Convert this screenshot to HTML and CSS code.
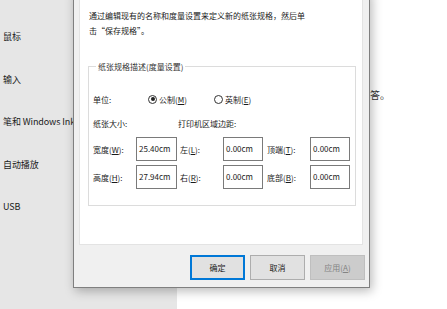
FILE: index.html
```html
<!DOCTYPE html>
<html lang="zh-CN">
<head>
    <meta charset="UTF-8">
    <title>纸张规格</title>
    <link rel="stylesheet" href="styles.css">
</head>
<body>

<div class="page">
    <!-- 设置左侧菜单 -->
    <div class="sidebar">
        <div class="nav-item">鼠标</div>
        <div class="nav-item">输入</div>
        <div class="nav-item">笔和 Windows Ink</div>
        <div class="nav-item">自动播放</div>
        <div class="nav-item">USB</div>
    </div>
    <div class="main">
        <div class="help-line">解答。</div>
    </div>
</div>

<!-- 纸张规格对话框 -->
<div class="dialog">
    <div class="panel">
        <p class="intro">通过编辑现有的名称和度量设置来定义新的纸张规格，然后单击“保存规格”。</p>

        <fieldset class="group">
            <legend>纸张规格描述(度量设置)</legend>

            <div class="unit-row">
                <span class="unit-label">单位:</span>
                <span class="radio-item metric"><span class="radio checked"></span>公制(<u>M</u>)</span>
                <span class="radio-item"><span class="radio"></span>英制(<u>E</u>)</span>
            </div>

            <div class="size-grid">
                <div class="head">纸张大小:</div>
                <div class="head margin-head">打印机区域边距:</div>

                <div class="lbl">宽度(<u>W</u>):</div>
                <div class="box">25.40cm</div>
                <div class="lbl mid">左(<u>L</u>):</div>
                <div class="box">0.00cm</div>
                <div class="lbl end">顶端(<u>T</u>):</div>
                <div class="box">0.00cm</div>

                <div class="lbl">高度(<u>H</u>):</div>
                <div class="box">27.94cm</div>
                <div class="lbl mid">右(<u>R</u>):</div>
                <div class="box">0.00cm</div>
                <div class="lbl end">底部(<u>B</u>):</div>
                <div class="box">0.00cm</div>
            </div>
        </fieldset>
    </div>

    <div class="footer">
        <button class="btn default">确定</button>
        <button class="btn">取消</button>
        <button class="btn disabled">应用(<u>A</u>)</button>
    </div>
</div>

</body>
</html>
```

FILE: styles.css
```css
body {
    margin: 0;
    width: 447px;
    height: 309px;
    overflow: hidden;
    position: relative;
    font-family: "Noto Sans CJK SC", "Noto Sans", sans-serif;
    background-color: #fff;
}
.page {
    display: flex;
    height: 100%;
}
.sidebar {
    width: 177px;
    background-color: #e6e6e6;
    padding-top: 16px;
    box-sizing: border-box;
}
.nav-item {
    height: 42.5px;
    line-height: 42.5px;
    padding-left: 3px;
    font-size: 9px;
    letter-spacing: -0.1px;
    color: #1a1a1a;
    white-space: nowrap;
}
.main {
    flex: 1;
}
.help-line {
    width: 213px;
    margin-top: 88px;
    text-align: right;
    font-size: 10px;
    line-height: 14px;
    color: #333;
    white-space: nowrap;
}

/* 对话框 */
.dialog {
    position: absolute;
    left: 73px;
    top: -10px;
    width: 295px;
    border: 1px solid #7f7f7f;
    border-top: none;
    background-color: #f0f0f0;
    box-shadow: 2px 3px 10px rgba(0, 0, 0, 0.28);
}
.panel {
    height: 255px;
    margin: 0 6px 0 5px;
    background-color: #fff;
    border: 1px solid #e3e3e3;
    border-top: none;
    box-sizing: border-box;
    padding: 18px 9px 0 9px;
    font-size: 8px;
    color: #1a1a1a;
}
.intro {
    margin: 0;
    width: 220px;
    line-height: 15px;
}
.group {
    margin: 21px 0 0 -1px;
    width: 268px;
    box-sizing: border-box;
    border: 1px solid #dcdcdc;
    padding: 15px 0 16px 4px;
}
.group legend {
    margin-left: 3px;
    padding: 0 2px;
    line-height: 15px;
    color: #333;
}
.unit-row {
    display: flex;
    align-items: center;
    height: 20px;
}
.unit-label {
    width: 55px;
}
.radio-item {
    display: flex;
    align-items: center;
}
.radio-item.metric {
    width: 66px;
}
.radio {
    width: 7px;
    height: 7px;
    border: 1px solid #333;
    border-radius: 50%;
    margin-right: 2px;
    position: relative;
}
.radio.checked::after {
    content: "";
    position: absolute;
    left: 1.5px;
    top: 1.5px;
    width: 4px;
    height: 4px;
    border-radius: 50%;
    background-color: #222;
}
.size-grid {
    display: grid;
    grid-template-columns: 43px 41px 46px 40px 47px 40px;
    grid-template-rows: 20px 24px 24px;
    row-gap: 4px;
    margin-top: 4px;
    align-items: center;
}
.head {
    grid-column: span 2;
}
.margin-head {
    grid-column: span 4;
    padding-left: 1px;
}
.lbl.mid {
    padding-left: 3px;
}
.lbl.end {
    padding-left: 4px;
}
.box {
    height: 24px;
    line-height: 22px;
    border: 1px solid #7a7a7a;
    box-sizing: border-box;
    padding-left: 2px;
    background-color: #fff;
}

/* 底部按钮 */
.footer {
    display: flex;
    justify-content: flex-end;
    gap: 5px;
    padding: 10px 4px 7px 0;
}
.btn {
    width: 55px;
    height: 25px;
    font-family: inherit;
    font-size: 8px;
    color: #1a1a1a;
    background-color: #e1e1e1;
    border: 1px solid #adadad;
    padding: 0;
}
.btn.default {
    border: 2px solid #0078d7;
}
.btn.disabled {
    background-color: #cccccc;
    border-color: #bfbfbf;
    color: #838383;
}
```
